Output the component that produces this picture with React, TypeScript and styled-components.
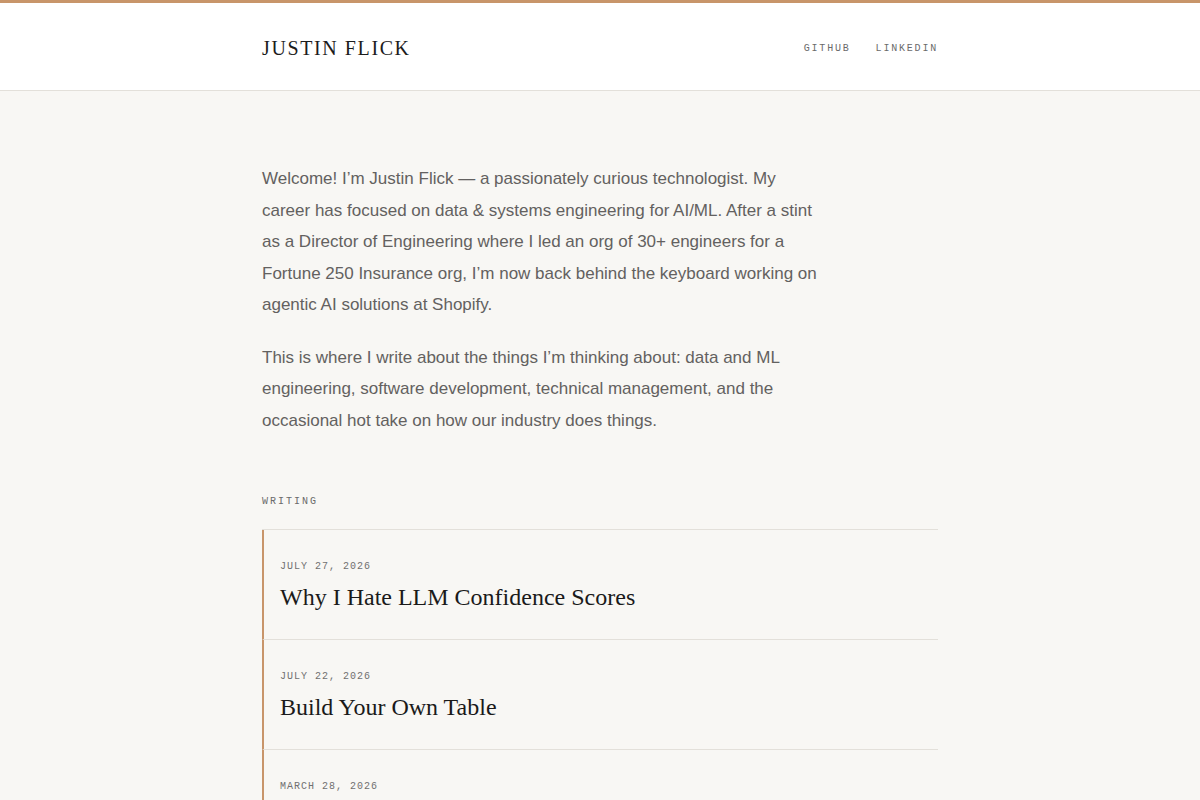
import React from 'react';
import styled, { createGlobalStyle } from 'styled-components';

const accent = '#c8956a';
const line = '#e3e0da';

const GlobalStyle = createGlobalStyle`
  html, body {
    margin: 0;
    padding: 0;
    background: #f8f7f4;
  }
  * { box-sizing: border-box; }
`;

const Page = styled.div`
  min-height: 100vh;
  border-top: 3px solid ${accent};
`;

const Header = styled.header`
  background: #ffffff;
  border-bottom: 1px solid ${line};
`;

const Inner = styled.div`
  width: 676px;
  margin: 0 auto;
`;

const HeaderRow = styled(Inner)`
  height: 87px;
  padding-top: 4px;
  display: flex;
  align-items: center;
  justify-content: space-between;
`;

const Brand = styled.a`
  font-family: "Liberation Serif", "Times New Roman", serif;
  font-size: 20px;
  letter-spacing: 1.6px;
  color: #1c1c1c;
  text-decoration: none;
`;

const Nav = styled.nav`
  display: flex;
  gap: 25px;
`;

const NavLink = styled.a`
  font-family: "Liberation Mono", "Courier New", monospace;
  font-size: 10px;
  letter-spacing: 1.8px;
  color: #6a6a6a;
  text-decoration: none;
  text-transform: uppercase;
`;

const Main = styled(Inner)`
  padding-top: 72px;
`;

const Intro = styled.section`
  max-width: 562px;
`;

const Para = styled.p`
  font-family: "Liberation Sans", Arial, sans-serif;
  font-size: 17px;
  line-height: 31.5px;
  color: #636160;
  margin: 0 0 21px;
`;

const SectionLabel = styled.h2`
  font-family: "Liberation Mono", "Courier New", monospace;
  font-size: 10px;
  font-weight: normal;
  letter-spacing: 2px;
  color: #6a6a6a;
  margin: 60px 0 22px;
  text-transform: uppercase;
`;

const PostList = styled.ul`
  list-style: none;
  margin: 0;
  padding: 0;
  border-top: 1px solid ${line};
`;

const PostItem = styled.li`
  border-left: 2px solid ${accent};
  border-bottom: 1px solid ${line};
  padding: 31px 16px 26px;
`;

const PostDate = styled.div`
  font-family: "Liberation Mono", "Courier New", monospace;
  font-size: 10px;
  line-height: 12px;
  letter-spacing: 1px;
  color: #707070;
  text-transform: uppercase;
`;

const PostTitle = styled.a`
  display: block;
  margin-top: 9px;
  font-family: "Liberation Serif", "Times New Roman", serif;
  font-size: 24px;
  line-height: 31px;
  color: #1a1a1a;
  text-decoration: none;
`;

const posts = [
  { date: 'July 27, 2026', title: 'Why I Hate LLM Confidence Scores' },
  { date: 'July 22, 2026', title: 'Build Your Own Table' },
  { date: 'March 28, 2026', title: 'Notes on Data Engineering' },
];

export default function App() {
  return (
    <>
      <GlobalStyle />
      <Page>
        <Header>
          <HeaderRow>
            <Brand href="#">JUSTIN FLICK</Brand>
            <Nav>
              <NavLink href="#">GitHub</NavLink>
              <NavLink href="#">LinkedIn</NavLink>
            </Nav>
          </HeaderRow>
        </Header>
        <Main>
          <Intro>
            <Para>
              Welcome! I’m Justin Flick — a passionately curious technologist. My career has focused on
              data &amp; systems engineering for AI/ML. After a stint as a Director of Engineering where
              I led an org of 30+ engineers for a Fortune 250 Insurance org, I’m now back behind the
              keyboard working on agentic AI solutions at Shopify.
            </Para>
            <Para>
              This is where I write about the things I’m thinking about: data and ML engineering,
              software development, technical management, and the occasional hot take on how our
              industry does things.
            </Para>
          </Intro>
          <SectionLabel>Writing</SectionLabel>
          <PostList>
            {posts.map(post => (
              <PostItem key={post.title}>
                <PostDate>{post.date}</PostDate>
                <PostTitle href="#">{post.title}</PostTitle>
              </PostItem>
            ))}
          </PostList>
        </Main>
      </Page>
    </>
  );
}
